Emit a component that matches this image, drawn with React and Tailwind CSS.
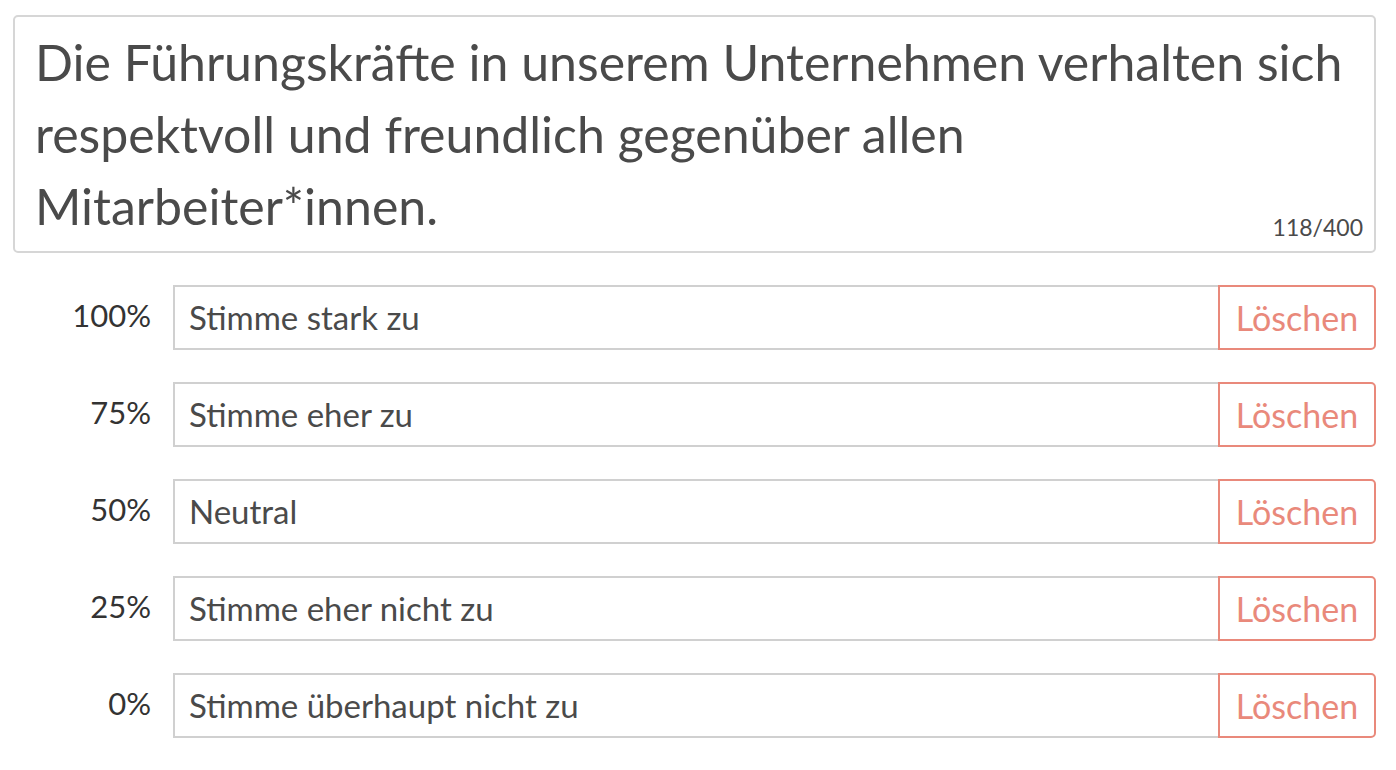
import React from 'react'

const options = [
    { pct: '100%', label: 'Stimme stark zu' },
    { pct: '75%', label: 'Stimme eher zu' },
    { pct: '50%', label: 'Neutral' },
    { pct: '25%', label: 'Stimme eher nicht zu' },
    { pct: '0%', label: 'Stimme überhaupt nicht zu' },
]

const OptionRow = ({ pct, label }) => {
    return (
        <div className="flex items-center h-[65px]">
            <div className="w-[138px] text-right text-[31px] text-[#333333] -mt-[4px]">{pct}</div>
            <div className="ml-[22px] flex-1 flex h-full">
                <div className="flex-1 flex items-center border-2 border-[#d0d0d0] border-r-0 bg-white px-[14px] text-[33px] text-[#4a4a4a]">
                    {label}
                </div>
                <button className="w-[158px] h-full border-2 border-[#e9897b] rounded-r-[5px] text-[34px] text-[#e9897b] bg-white">
                    Löschen
                </button>
            </div>
        </div>
    )
}

export default function App() {
    return (
        <div className="w-[1396px] h-[770px] bg-white pt-[15px] pl-[13px] pr-[20px]" style={{ fontFamily: 'Lato, "Noto Sans", sans-serif' }}>
            <div className="relative h-[238px] border-2 border-[#d6d6d6] rounded-[5px] px-[20px] pt-[9px]">
                <p className="text-[50px] leading-[72px] text-[#4a4a4a]">
                    Die Führungskräfte in unserem Unternehmen verhalten sich respektvoll und freundlich gegenüber allen Mitarbeiter*innen.
                </p>
                <span className="absolute right-[11px] bottom-[7px] text-[23px] text-[#4a4a4a]">118/400</span>
            </div>
            <div className="mt-[32px] flex flex-col gap-[32px]">
                {options.map((o) => (
                    <OptionRow key={o.pct} pct={o.pct} label={o.label} />
                ))}
            </div>
        </div>
    )
}
